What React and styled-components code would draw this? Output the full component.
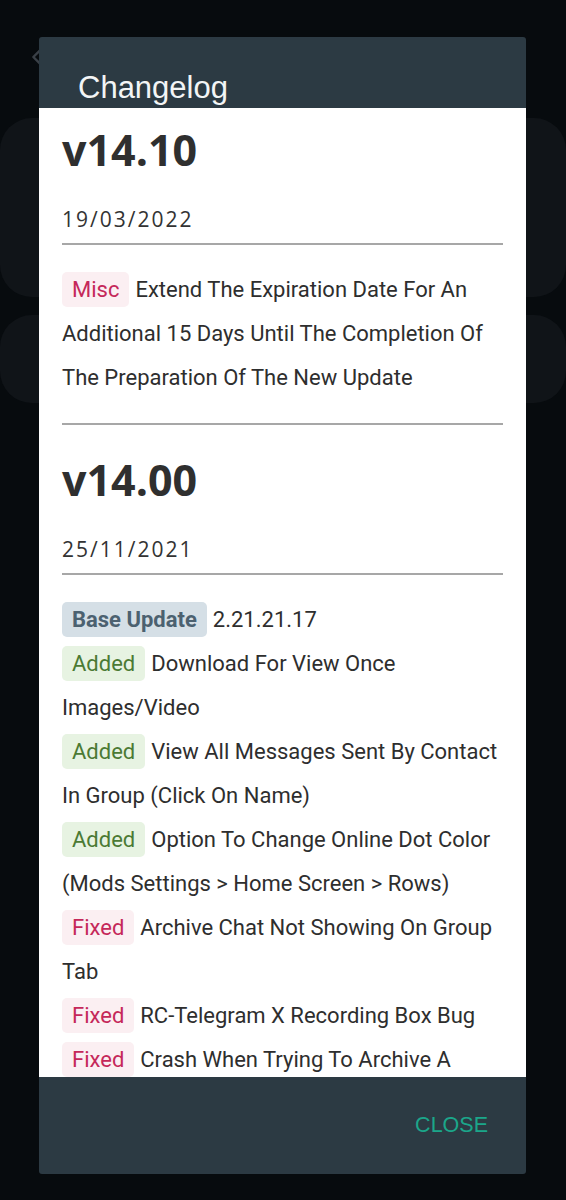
import styled, { createGlobalStyle } from "styled-components";

const GlobalStyle = createGlobalStyle`
  html, body {
    margin: 0;
    padding: 0;
    background: #070b0e;
  }
  body {
    font-family: Roboto, "Noto Sans", sans-serif;
  }
  * {
    box-sizing: border-box;
  }
`;

const Screen = styled.div`
  position: relative;
  width: 566px;
  height: 1200px;
  overflow: hidden;
  background: #070b0e;
`;

const AppBar = styled.div`
  height: 118px;
  display: flex;
  align-items: flex-start;
  padding: 46px 0 0 26px;
`;

const CardList = styled.div`
  display: flex;
  flex-direction: column;
  gap: 18px;
`;

const BackCard = styled.div`
  height: ${(p) => p.$h}px;
  background: #101418;
  border-radius: 32px;
`;

const Overlay = styled.div`
  position: absolute;
  inset: 0;
  padding: 37px 40px 26px 39px;
  display: flex;
`;

const Dialog = styled.div`
  flex: 1;
  display: flex;
  flex-direction: column;
  border-radius: 3px;
  overflow: hidden;
  background: #2c3a43;
`;

const Header = styled.div`
  height: 71px;
  padding: 31px 0 0 39px;
`;

const Title = styled.h2`
  margin: 0;
  font-family: "Liberation Sans", Arial, sans-serif;
  font-weight: 400;
  font-size: 31px;
  line-height: 40px;
  color: #f3f5f6;
`;

const Body = styled.div`
  flex: 1;
  overflow: hidden;
  background: #ffffff;
  padding: 16px 23px 0 23px;
`;

const Section = styled.section`
  & + & {
    padding-top: 29px;
  }
`;

const Version = styled.h1`
  margin: 0;
  font-family: "Open Sans", "Noto Sans", sans-serif;
  font-weight: 700;
  font-size: 43px;
  line-height: 52px;
  color: #2f2f2f;
`;

const DateLine = styled.div`
  margin-top: 28px;
  font-family: "Open Sans", "Noto Sans", sans-serif;
  font-size: 21px;
  line-height: 30px;
  letter-spacing: 2px;
  color: #333333;
`;

const Rule = styled.hr`
  margin: ${(p) => (p.$end ? "23px 0 0" : "9px 0 23px")};
  border: 0;
  height: 2px;
  background: #a7a7a7;
`;

const Note = styled.div`
  font-size: 22px;
  line-height: 44px;
  color: #2e2e2e;
`;

const tagColors = {
  misc: { bg: "#fbeff2", fg: "#c5285a", weight: 400 },
  fixed: { bg: "#fbeff2", fg: "#c5285a", weight: 400 },
  added: { bg: "#e7f3e2", fg: "#4b7a34", weight: 400 },
  base: { bg: "#d5dfe6", fg: "#4c6170", weight: 700 },
};

const Tag = styled.span`
  display: inline-block;
  padding: 0 10px;
  margin-right: 6px;
  border-radius: 5px;
  line-height: 35px;
  background: ${(p) => tagColors[p.$kind].bg};
  color: ${(p) => tagColors[p.$kind].fg};
  font-weight: ${(p) => tagColors[p.$kind].weight};
`;

const Footer = styled.div`
  height: 97px;
  display: flex;
  align-items: center;
  justify-content: flex-end;
  padding-right: 38px;
`;

const CloseButton = styled.button`
  border: 0;
  background: none;
  padding: 0;
  font-family: "Liberation Sans", Arial, sans-serif;
  font-size: 21.5px;
  color: #1ba68a;
  cursor: pointer;
`;

const releases = [
  {
    version: "v14.10",
    date: "19/03/2022",
    notes: [
      {
        kind: "misc",
        label: "Misc",
        text: "Extend The Expiration Date For An Additional 15 Days Until The Completion Of The Preparation Of The New Update",
      },
    ],
  },
  {
    version: "v14.00",
    date: "25/11/2021",
    notes: [
      { kind: "base", label: "Base Update", text: "2.21.21.17" },
      { kind: "added", label: "Added", text: "Download For View Once Images/Video" },
      { kind: "added", label: "Added", text: "View All Messages Sent By Contact In Group (Click On Name)" },
      { kind: "added", label: "Added", text: "Option To Change Online Dot Color (Mods Settings > Home Screen > Rows)" },
      { kind: "fixed", label: "Fixed", text: "Archive Chat Not Showing On Group Tab" },
      { kind: "fixed", label: "Fixed", text: "RC-Telegram X Recording Box Bug" },
      { kind: "fixed", label: "Fixed", text: "Crash When Trying To Archive A Group" },
    ],
  },
];

export default function App() {
  return (
    <>
      <GlobalStyle />
      <Screen>
        <AppBar>
          <svg width="22" height="22" viewBox="0 0 24 24" fill="none">
            <path d="M15 5l-7 7 7 7" stroke="#3a4047" strokeWidth="2.6" strokeLinecap="round" strokeLinejoin="round" />
          </svg>
        </AppBar>
        <CardList>
          <BackCard $h={179} />
          <BackCard $h={88} />
        </CardList>

        <Overlay>
          <Dialog>
            <Header>
              <Title>Changelog</Title>
            </Header>
            <Body>
              {releases.map((r, i) => (
                <Section key={r.version}>
                  <Version>{r.version}</Version>
                  <DateLine>{r.date}</DateLine>
                  <Rule />
                  {r.notes.map((n, j) => (
                    <Note key={j}>
                      <Tag $kind={n.kind}>{n.label}</Tag>
                      {n.text}
                    </Note>
                  ))}
                  {i < releases.length - 1 && <Rule $end />}
                </Section>
              ))}
            </Body>
            <Footer>
              <CloseButton>CLOSE</CloseButton>
            </Footer>
          </Dialog>
        </Overlay>
      </Screen>
    </>
  );
}
